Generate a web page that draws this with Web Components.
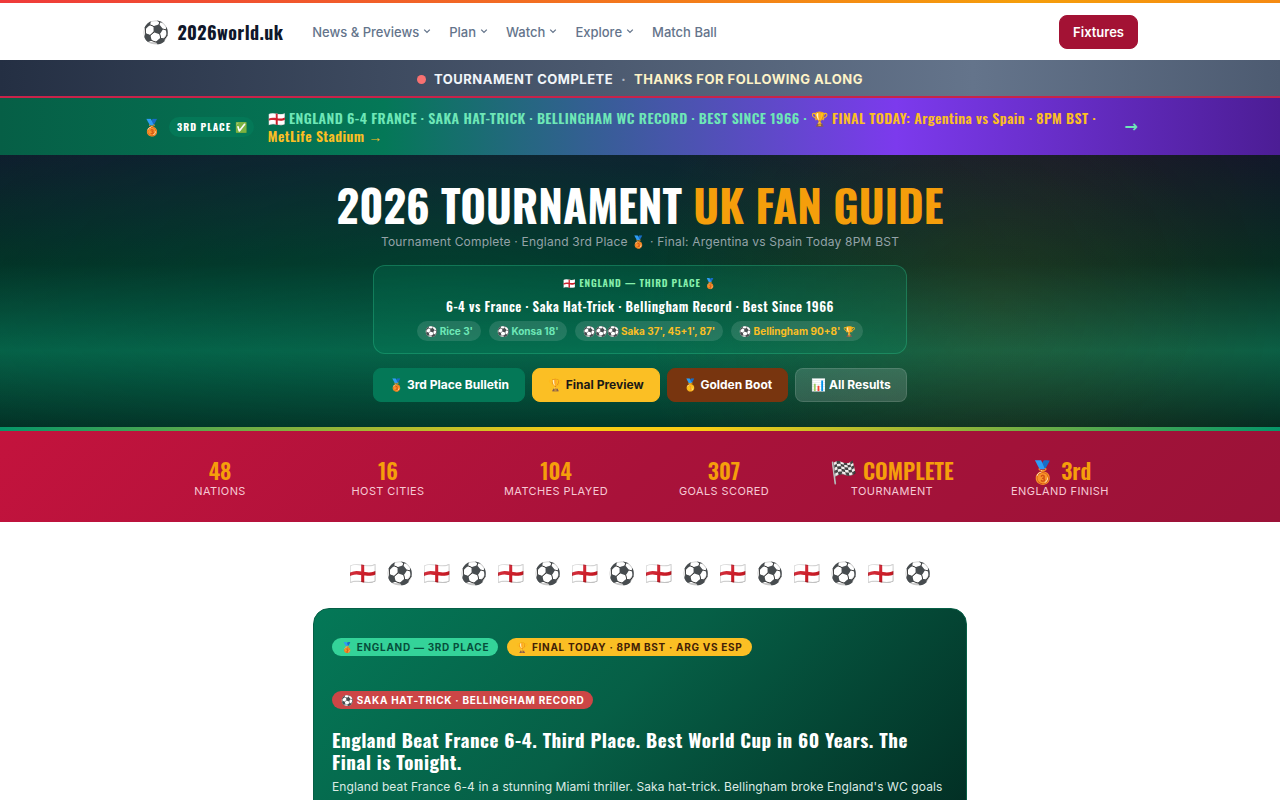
<!DOCTYPE html>
<html lang="en-GB">
<head>
<meta charset="utf-8">
<meta name="viewport" content="width=device-width, initial-scale=1">
<title>2026world.uk - UK Fan Guide</title>
<style>
  :root {
    --display: Oswald, 'Roboto Condensed', sans-serif;
    --gutter: 142px;
    --gold: #f59e0b;
    --amber: #fbbf24;
    --mint: #6ee7b7;
  }
  @media (max-width: 1100px) {
    :root { --gutter: 24px; }
  }
  body {
    margin: 0;
    background: #fff;
    color: #0f172a;
    font: 13px/20px Inter, 'Noto Sans', sans-serif;
  }
  main {
    display: flex;
    flex-direction: column;
    align-items: center;
    padding: 32px 24px;
  }
</style>
</head>
<body>

<template id="siteHeader">
  <style>
    :host { display: block; background: #fff; }
    .stripe { height: 3px; background: linear-gradient(90deg, #ef3a3a, #f59e0b 80%, #f58a12); }
    .bar {
      display: flex;
      align-items: center;
      gap: 29px;
      height: 57px;
      padding: 0 var(--gutter);
    }
    .brand {
      display: flex;
      align-items: center;
      gap: 8px;
      color: #0f172a;
      font: 700 18px/24px var(--display);
      letter-spacing: 0.4px;
      text-decoration: none;
    }
    .ball { font: 22px/24px Inter, sans-serif; }
    nav { display: flex; flex: 1; gap: 18px; }
  </style>
  <div class="stripe"></div>
  <header class="bar">
    <a class="brand" href="#"><span class="ball">⚽</span>2026world.uk</a>
    <nav><slot></slot></nav>
    <slot name="action"></slot>
  </header>
</template>

<template id="navItem">
  <style>
    :host { display: block; }
    button, a {
      display: flex;
      align-items: center;
      gap: 4px;
      padding: 0;
      border: 0;
      background: none;
      color: #64748b;
      font: 500 13px/20px Inter, sans-serif;
      text-decoration: none;
      cursor: pointer;
    }
    svg { width: 8px; height: 8px; }
  </style>
</template>

<template id="linkButton">
  <style>
    :host { display: block; }
    a {
      display: block;
      padding: 6px 15px;
      border: 1px solid var(--line, transparent);
      border-radius: 8px;
      background: var(--fill, #9f1239);
      color: var(--ink, #fff);
      font: 700 12px/20px Inter, sans-serif;
      text-decoration: none;
      white-space: nowrap;
    }
    :host([tone="crimson"]) a { --fill: #a31234; --line: #a31234; padding: 6px 13px; font-size: 13px; font-weight: 600; }
    :host([tone="green"]) a { --fill: #047857; --line: #047857; }
    :host([tone="amber"]) a { --fill: #fbbf24; --line: #fbbf24; --ink: #1c1917; }
    :host([tone="brown"]) a { --fill: #78350f; --line: #78350f; }
    :host([tone="glass"]) a {
      --fill: rgba(255, 255, 255, 0.15);
      --line: rgba(255, 255, 255, 0.25);
      background-clip: padding-box;
    }
  </style>
  <a href="#"><slot></slot></a>
</template>

<template id="statusBar">
  <style>
    :host {
      display: flex;
      align-items: center;
      justify-content: center;
      gap: 8px;
      height: 34px;
      padding-top: 2px;
      border-bottom: 2px solid #c8234a;
      background: linear-gradient(90deg, #242f43, #64748b 76%, #4d5b71);
      color: #f1f5f9;
      font-size: 13px;
      font-weight: 700;
      letter-spacing: 0.5px;
    }
    i { width: 9px; height: 9px; border-radius: 50%; background: #f87171; }
    .dot { opacity: 0.6; }
    ::slotted([slot="note"]) { color: #fef3c7; }
  </style>
  <i></i><slot></slot><span class="dot">·</span><slot name="note"></slot>
</template>

<template id="resultTicker">
  <style>
    :host { display: block; background: linear-gradient(90deg, #065f46, #047857 30%, #7c3aed 70%, #4c1d95); }
    a {
      display: flex;
      align-items: center;
      padding: 11px var(--gutter) 10px;
      color: #fff;
      text-decoration: none;
    }
    .medal { width: 27px; font-size: 16px; line-height: 20px; }
    .badge {
      margin-right: 14px;
      padding: 0 6px 0 8px;
      border-radius: 10px;
      background: #047857;
      font: 700 10px/20px var(--display);
      letter-spacing: 1px;
      white-space: nowrap;
    }
    .news {
      flex: 1;
      color: var(--mint);
      font: 600 14px/18px var(--display);
      letter-spacing: 0.4px;
    }
    .go { margin-left: 24px; color: var(--mint); font: 700 16px/20px 'DejaVu Sans', sans-serif; }
    ::slotted(b) { color: var(--amber); font-weight: 600; }
  </style>
  <a href="#">
    <span class="medal">🥉</span>
    <span class="badge"><slot name="badge"></slot></span>
    <span class="news"><slot></slot></span>
    <span class="go">→</span>
  </a>
</template>

<template id="fanHero">
  <style>
    :host {
      display: flex;
      flex-direction: column;
      align-items: center;
      padding: 26px 24px 25px;
      border-bottom: 4px solid;
      border-image: linear-gradient(90deg, #059669, #facc15 45%, #facc15 55%, #059669) 1;
      background:
        radial-gradient(ellipse 28% 130% at 78% 55%, rgba(180, 83, 9, 0.15), transparent),
        radial-gradient(ellipse 60% 130% at 35% 50%, rgba(4, 120, 87, 0.25), transparent),
        linear-gradient(180deg, #0f172a 0%, #022c22 40%, #065f46 72%, #022c22 100%);
      color: #fff;
      text-align: center;
    }
    h1 {
      margin: 0;
      font: 700 44px/48px var(--display);
      text-transform: uppercase;
    }
    h1 ::slotted(em) { color: var(--gold); font-style: normal; }
    .lead { margin: 3px 0 13px; color: #94a3a8; font-size: 12px; letter-spacing: 0.2px; line-height: 20px; }
    .actions { display: flex; flex-wrap: wrap; justify-content: center; gap: 7px; margin-top: 14px; }
  </style>
  <h1><slot name="title"></slot> <slot name="accent"></slot></h1>
  <div class="lead"><slot name="lead"></slot></div>
  <slot></slot>
  <div class="actions"><slot name="action"></slot></div>
</template>

<template id="scoreCard">
  <style>
    :host {
      display: flex;
      flex-direction: column;
      gap: 5px;
      box-sizing: border-box;
      width: 100%;
      max-width: 534px;
      padding: 9px 16px 12px;
      border: 1px solid rgba(52, 211, 153, 0.3);
      border-radius: 12px;
      background: rgba(5, 150, 105, 0.2);
    }
    .label { color: #86efac; font: 600 10px/16px var(--display); letter-spacing: 0.8px; }
    h2 { margin: 0; font: 600 13px/20px var(--display); letter-spacing: 0.5px; }
    .chips { display: flex; flex-wrap: wrap; justify-content: center; gap: 8px; }
  </style>
  <div class="label"><slot name="label"></slot></div>
  <h2><slot name="title"></slot></h2>
  <div class="chips"><slot></slot></div>
</template>

<template id="scoreChip">
  <style>
    :host {
      padding: 0 8px;
      border-radius: 10px;
      background: rgba(255, 255, 255, 0.12);
      color: var(--mint);
      font: 700 10px/20px Inter, sans-serif;
    }
    :host([star]) { color: var(--amber); }
  </style>
  <slot></slot>
</template>

<template id="statStrip">
  <style>
    :host {
      display: grid;
      grid-template-columns: repeat(6, 1fr);
      gap: 12px;
      padding: 25px var(--gutter) 24px;
      background: linear-gradient(135deg, #c3133d, #a9123a 50%, #9b1238);
    }
  </style>
  <slot></slot>
</template>

<template id="statItem">
  <style>
    :host { display: block; text-align: center; white-space: nowrap; }
    .value { color: var(--gold); font: 600 22px/28px var(--display); }
    .name { color: #f6c9d4; font-size: 11px; line-height: 14px; letter-spacing: 0.4px; text-transform: uppercase; }
  </style>
  <div class="value"><slot></slot></div>
  <div class="name"></div>
</template>

<template id="flagDivider">
  <style>
    :host { display: flex; gap: 10px; font-size: 22px; line-height: 38px; }
  </style>
</template>

<template id="newsCard">
  <style>
    :host {
      display: block;
      box-sizing: border-box;
      width: 100%;
      max-width: 654px;
      min-height: 230px;
      margin-top: 16px;
      padding: 29px 18px;
      border: 1px solid #065f46;
      border-radius: 16px;
      background: linear-gradient(135deg, #047857, #065f46 45%, #022c22);
      color: #fff;
    }
    .tags { display: flex; flex-wrap: wrap; gap: 35px 9px; }
    h2 { margin: 19px 0 5px; font: 700 19px/22px var(--display); letter-spacing: 0.5px; }
    .text { color: #dcebe5; font-size: 12px; line-height: 20px; letter-spacing: 0.1px; }
  </style>
  <div class="tags"><slot name="tag"></slot></div>
  <h2><slot name="title"></slot></h2>
  <div class="text"><slot></slot></div>
</template>

<template id="newsTag">
  <style>
    :host {
      padding: 0 9px;
      border-radius: 9px;
      background: #34d399;
      color: #064e3b;
      font: 700 10px/18px Inter, sans-serif;
      letter-spacing: 0.7px;
      text-transform: uppercase;
    }
    :host([tone="amber"]) { background: var(--amber); color: #422006; }
    :host([tone="red"]) { background: #cc4646; color: #fff; }
  </style>
  <slot></slot>
</template>

<site-header>
  <nav-item menu>News &amp; Previews</nav-item>
  <nav-item menu>Plan</nav-item>
  <nav-item menu>Watch</nav-item>
  <nav-item menu>Explore</nav-item>
  <nav-item>Match Ball</nav-item>
  <link-button slot="action" tone="crimson">Fixtures</link-button>
</site-header>

<status-bar>
  <span>TOURNAMENT COMPLETE</span>
  <span slot="note">THANKS FOR FOLLOWING ALONG</span>
</status-bar>

<result-ticker>
  <span slot="badge">3RD PLACE ✅</span>
  🏴󠁧󠁢󠁥󠁮󠁧󠁿 ENGLAND 6-4 FRANCE · SAKA HAT-TRICK · BELLINGHAM WC RECORD · BEST SINCE 1966 · <b>🏆 FINAL TODAY: Argentina vs Spain · 8PM BST · MetLife Stadium →</b>
</result-ticker>

<fan-hero>
  <span slot="title">2026 Tournament</span>
  <em slot="accent">UK Fan Guide</em>
  <span slot="lead">Tournament Complete · England 3rd Place 🥉 · Final: Argentina vs Spain Today 8PM BST</span>
  <score-card>
    <span slot="label">🏴󠁧󠁢󠁥󠁮󠁧󠁿 ENGLAND — THIRD PLACE 🥉</span>
    <span slot="title">6-4 vs France · Saka Hat-Trick · Bellingham Record · Best Since 1966</span>
    <score-chip>⚽ Rice 3'</score-chip>
    <score-chip>⚽ Konsa 18'</score-chip>
    <score-chip star>⚽⚽⚽ Saka 37', 45+1', 87'</score-chip>
    <score-chip star>⚽ Bellingham 90+8' 🏆</score-chip>
  </score-card>
  <link-button slot="action" tone="green">🥉 3rd Place Bulletin</link-button>
  <link-button slot="action" tone="amber">🏆 Final Preview</link-button>
  <link-button slot="action" tone="brown">🥇 Golden Boot</link-button>
  <link-button slot="action" tone="glass">📊 All Results</link-button>
</fan-hero>

<stat-strip>
  <stat-item name="Nations">48</stat-item>
  <stat-item name="Host Cities">16</stat-item>
  <stat-item name="Matches Played">104</stat-item>
  <stat-item name="Goals Scored">307</stat-item>
  <stat-item name="Tournament">🏁 COMPLETE</stat-item>
  <stat-item name="England Finish">🥉 3rd</stat-item>
</stat-strip>

<main>
  <flag-divider pairs="8"></flag-divider>
  <news-card>
    <news-tag slot="tag">🥉 England — 3rd Place</news-tag>
    <news-tag slot="tag" tone="amber">🏆 Final Today · 8PM BST · ARG vs ESP</news-tag>
    <news-tag slot="tag" tone="red">⚽ Saka Hat-Trick · Bellingham Record</news-tag>
    <span slot="title">England Beat France 6-4. Third Place. Best World Cup in 60 Years. The Final is Tonight.</span>
    England beat France 6-4 in a stunning Miami thriller. Saka hat-trick. Bellingham broke England's WC goals
  </news-card>
</main>

<script>
  (function fanGuide(customElements, document) {
    'use strict';

    class TemplateElement extends HTMLElement {
      constructor() {
        super();
        const shadowRoot = this.attachShadow( {mode: 'open'} );
        const temp = document.querySelector('#' + this.constructor.template);
        shadowRoot.appendChild(document.importNode(temp.content, true));
      }
    }

    class NavItem extends TemplateElement {
      static get template() { return 'navItem'; }

      // items with a menu are buttons with a chevron, the others plain links
      connectedCallback() {
        const menu = this.hasAttribute('menu');
        const control = document.createElement(menu ? 'button' : 'a');
        control.innerHTML = '<slot></slot>';
        if (menu) {
          control.type = 'button';
          control.innerHTML += '<svg viewBox="0 0 8 8" fill="none" stroke="currentColor" stroke-width="1.3"><path d="M1.2 1.6l2.8 2.8 2.8-2.8"/></svg>';
        } else {
          control.href = '#';
        }
        this.shadowRoot.appendChild(control);
      }
    }

    class StatItem extends TemplateElement {
      static get template() { return 'statItem'; }

      connectedCallback() {
        this.shadowRoot.querySelector('.name').textContent = this.getAttribute('name');
      }
    }

    class FlagDivider extends TemplateElement {
      static get template() { return 'flagDivider'; }

      connectedCallback() {
        for (let i = 0; i < Number(this.getAttribute('pairs')); i++) {
          ['🏴󠁧󠁢󠁥󠁮󠁧󠁿', '⚽'].forEach((glyph) => {
            const span = document.createElement('span');
            span.textContent = glyph;
            this.shadowRoot.appendChild(span);
          });
        }
      }
    }

    const plain = {
      'site-header': 'siteHeader',
      'link-button': 'linkButton',
      'status-bar': 'statusBar',
      'result-ticker': 'resultTicker',
      'fan-hero': 'fanHero',
      'score-card': 'scoreCard',
      'score-chip': 'scoreChip',
      'stat-strip': 'statStrip',
      'news-card': 'newsCard',
      'news-tag': 'newsTag'
    };

    Object.keys(plain).forEach((name) => {
      customElements.define(name, class extends TemplateElement {
        static get template() { return plain[name]; }
      });
    });
    customElements.define('nav-item', NavItem);
    customElements.define('stat-item', StatItem);
    customElements.define('flag-divider', FlagDivider);
  })(window.customElements, document);
</script>
</body>
</html>
